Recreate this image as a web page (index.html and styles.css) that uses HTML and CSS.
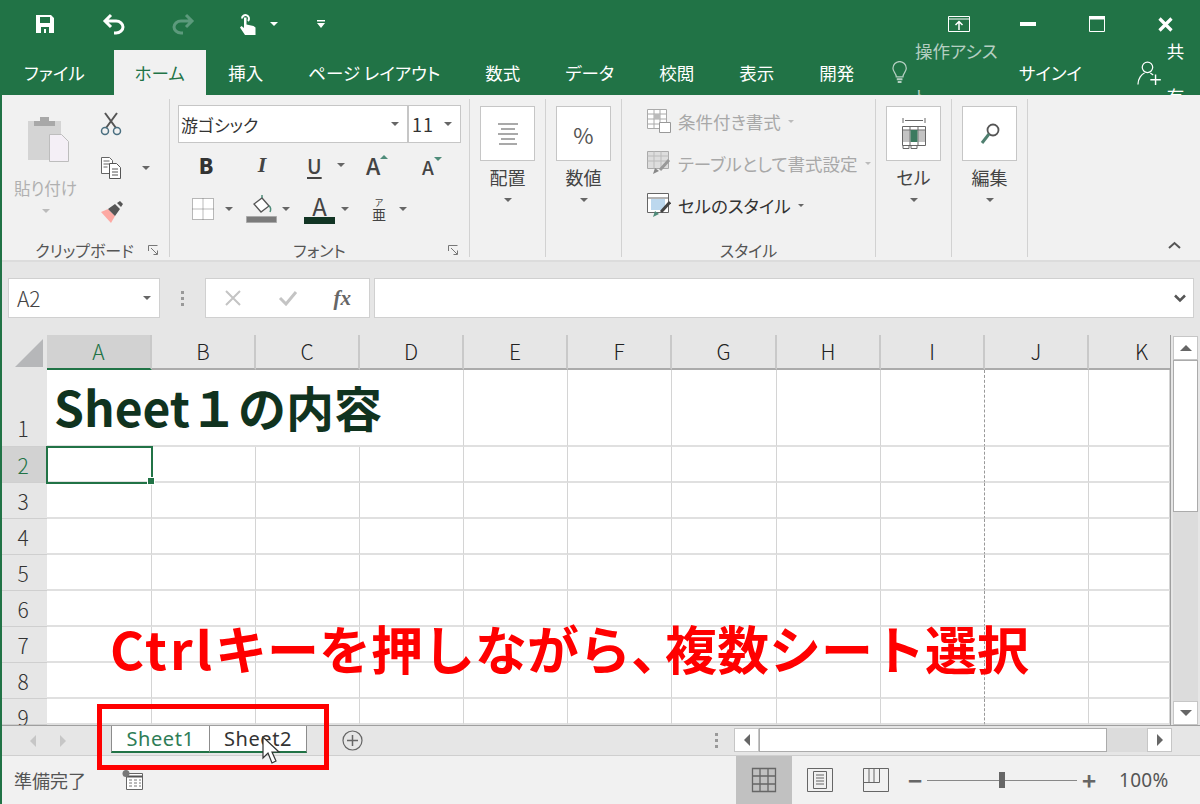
FILE: index.html
```html
<!DOCTYPE html>
<html lang="ja">
<head>
<meta charset="utf-8">
<title>Excel</title>
<link rel="stylesheet" href="styles.css">
</head>
<body>

<!-- title bar -->
<div class="titlebar">
  <div class="qat">
    <span class="qbtn"><svg width="20" height="20" viewBox="0 0 20 20"><path fill="#fff" fill-rule="evenodd" d="M1 1h15l3 3v15H1zM5 3v6h10V3zM6 13v6h3v-4h2v4h3v-6z"/></svg></span>
    <span class="qbtn"><svg width="24" height="22" viewBox="0 0 24 22"><path d="M9 2L3 8l6 6M3 8h11c4 0 7 3 7 6s-3 6-7 6h-2" fill="none" stroke="#fff" stroke-width="3"/></svg></span>
    <span class="qbtn"><svg width="24" height="22" viewBox="0 0 24 22"><path d="M15 2l6 6-6 6M21 8H10c-4 0-7 3-7 6s3 6 7 6h2" fill="none" stroke="#5c9a7c" stroke-width="3"/></svg></span>
    <span class="qbtn qtouch"><svg width="18" height="22" viewBox="0 0 18 22"><path d="M3 5.500a3.500 3.500 0 1 1 6 2.500" fill="none" stroke="#fff" stroke-width="2"/><path fill="#fff" d="M5 4.500h2.500v7l7 1.500 2 1.500v7.500H6L1 14.500l1.500-1.500 2.500 2z"/></svg><i class="caret white"></i></span>
    <span class="qcustom"><svg width="8" height="9" viewBox="0 0 8 9"><path fill="#fff" d="M0 0h8v1.500H0zM0 3h8L4 8z"/></svg></span>
  </div>
  <div class="winbtns">
    <span class="wbtn"><svg width="22" height="16" viewBox="0 0 22 16"><path d="M.5.500h21v15H.5zM.5 3h21" fill="none" stroke="#fff"/><path d="M11 14V6M7.500 9l3.500-3.500L14.500 9" fill="none" stroke="#fff" stroke-width="1.500"/></svg></span>
    <span class="wbtn"><svg width="16" height="4" viewBox="0 0 16 4"><path fill="#fff" d="M0 0h16v4H0z"/></svg></span>
    <span class="wbtn"><svg width="16" height="16" viewBox="0 0 16 16"><path d="M.5.500h15v15H.5z" fill="none" stroke="#fff"/><path fill="#fff" d="M0 0h16v3.500H0z"/></svg></span>
    <span class="wbtn"><svg width="15" height="15" viewBox="0 0 15 15"><path d="M1.500 1.500l12 12M13.500 1.500l-12 12" stroke="#fff" stroke-width="3.200"/></svg></span>
  </div>
</div>

<!-- ribbon tabs -->
<div class="tabs">
  <span class="tab first">ファイル</span>
  <span class="tab active">ホーム</span>
  <span class="tab">挿入</span>
  <span class="tab">ページ レイアウト</span>
  <span class="tab">数式</span>
  <span class="tab">データ</span>
  <span class="tab">校閲</span>
  <span class="tab">表示</span>
  <span class="tab">開発</span>
  <span class="assist"><svg width="16" height="24" viewBox="0 0 16 24"><path d="M4.500 16c0-4-3.500-5-3.500-9a7 7 0 0 1 14 0c0 4-3.500 5-3.500 9z" fill="none" stroke="#b5cfc2" stroke-width="1.300"/><path fill="#b5cfc2" d="M5 17.500h6v2H5zM6 20.500h4v2H6z"/></svg><span class="assist-text">操作アシスト.</span></span>
  <span class="signin">サインイン</span>
  <span class="share"><svg width="26" height="26" viewBox="0 0 26 26"><circle cx="11" cy="7" r="5.500" fill="none" stroke="#fff" stroke-width="1.300"/><path d="M1 25c0-6 4-11 7-12M14 13l3 2" fill="none" stroke="#fff" stroke-width="1.300"/><path d="M14 20h11M19.500 14.500v11" stroke="#fff" stroke-width="1.500"/></svg>共有</span>
</div>

<div class="main">

<!-- ribbon -->
<div class="ribbon">

  <div class="group g-clip">
    <div class="clip-body">
      <div class="paste">
        <svg width="42" height="46" viewBox="0 0 42 46"><path fill="#d4d4d4" d="M0 5h33v39H0z"/><path fill="#a8a8a8" d="M6 5h21v5H6zM12 1h9v5h-9z"/><path fill="#f4eff6" stroke="#bdbdbd" d="M21.500 18.500h12l7 7v20h-19z"/></svg>
        <span class="paste-label">貼り付け</span>
        <i class="caret light"></i>
      </div>
      <div class="clip-tools">
        <span class="clip-tool"><svg width="22" height="24" viewBox="0 0 22 24"><path d="M5 1l11 15M17 1L6 16" stroke="#555" stroke-width="2"/><circle cx="5" cy="19" r="3.500" fill="none" stroke="#4a6f80" stroke-width="1.500"/><circle cx="17" cy="19" r="3.500" fill="none" stroke="#4a6f80" stroke-width="1.500"/></svg></span>
        <span class="clip-tool copy"><svg width="22" height="24" viewBox="0 0 22 24"><path d="M1.500 1.500h8l3 3v13h-11zM3.500 5h6M3.500 8h6M3.500 11h4" fill="#fff" stroke="#666"/><path d="M9.500 7.500h7l4 4v11h-11zM12 13h6M12 16h6M12 19h6" fill="#fff" stroke="#555"/></svg><i class="caret"></i></span>
        <span class="clip-tool"><svg width="24" height="22" viewBox="0 0 24 22"><path fill="#fda9a3" d="M1 11l7-3 7 7-4 7z"/><path fill="#555" d="M8 8l7-5 5 5-5 7zM17 2l3-2 3 3-2 3z"/></svg></span>
      </div>
    </div>
    <div class="group-label">クリップボード<svg class="launcher" width="10" height="10" viewBox="0 0 10 10"><path d="M.5 6V.5H9.500M3 3l6 6M5.500 9.500h4v-4" fill="none" stroke="#777"/></svg></div>
  </div>

  <div class="group g-font">
    <div class="font-body">
      <div class="font-row">
        <span class="fontname">游ゴシック<i class="caret"></i></span>
        <span class="fontsize">11<i class="caret"></i></span>
      </div>
      <div class="tool-row row-style">
        <span class="t-b">B</span>
        <span class="t-i">I</span>
        <span class="t-u"><u>U</u><i class="caret"></i></span>
        <span class="t-grow">A<i class="tri-up"></i></span>
        <span class="t-shrink">A<i class="tri-down"></i></span>
      </div>
      <div class="tool-row row-fill">
        <span class="t-border"><svg width="22" height="22" viewBox="0 0 22 22"><path d="M.5.500h21v21H.5zM11 .5v21M.5 11h21" fill="#fff" stroke="#777" stroke-dasharray="1 1"/></svg><i class="caret"></i></span>
        <span class="t-paint"><svg width="31" height="28" viewBox="0 0 31 28"><path d="M8 9l8-6 7 8-8 6z" fill="#fff" stroke="#555" stroke-width="1.300"/><path d="M16 3V0M23 11c2 1 2 4 1 6" fill="none" stroke="#4f8c7a" stroke-width="1.500"/><path fill="#7b7b7b" stroke="#aaa" d="M.5 21.500h30v6H.5z"/></svg><i class="caret"></i></span>
        <span class="t-color"><span class="color-a">A</span><i class="caret"></i></span>
        <span class="t-phon"><span class="phon"><small>ア</small>亜</span><i class="caret"></i></span>
      </div>
    </div>
    <div class="group-label">フォント<svg class="launcher" width="10" height="10" viewBox="0 0 10 10"><path d="M.5 6V.5H9.500M3 3l6 6M5.500 9.500h4v-4" fill="none" stroke="#777"/></svg></div>
  </div>

  <div class="group g-big">
    <div class="bigbtn"><svg width="20" height="22" viewBox="0 0 20 22"><path d="M0 1h20M3 6h14M0 11h20M3 16h14M1 21h18" stroke="#555" stroke-width="1.200"/></svg></div>
    <span class="big-label">配置</span>
    <i class="caret"></i>
  </div>

  <div class="group g-big">
    <div class="bigbtn"><span class="percent">%</span></div>
    <span class="big-label">数値</span>
    <i class="caret"></i>
  </div>

  <div class="group g-style">
    <div class="style-rows">
      <div class="style-row off"><svg width="24" height="24" viewBox="0 0 24 24"><path d="M.5.500h19v19H.5zM.5 5h19M.5 10h19M.5 15h19M7 .5v19M13 .5v19" fill="#fff" stroke="#aaa"/><path fill="#bbb" d="M7 5h6v5H7z"/><path d="M12.500 13.500h11v10h-11z" fill="#fff" stroke="#999"/></svg>条件付き書式<i class="caret small light"></i></div>
      <div class="style-row off"><svg width="24" height="24" viewBox="0 0 24 24"><path d="M.5.500h21v17H.5z" fill="#ddd" stroke="#aaa"/><path d="M.5 5h21M.5 10h21M7 .5v17M14 .5v17" stroke="#bbb"/><path d="M22 9l-9 10" stroke="#999" stroke-width="3"/><path fill="#888" d="M6 23l2-6 4 3z"/></svg>テーブルとして書式設定<i class="caret small light"></i></div>
      <div class="style-row"><svg width="24" height="24" viewBox="0 0 24 24"><path d="M.5.500h21v19H.5zM.5 5h21" fill="#fff" stroke="#666"/><path fill="#bcd8ee" d="M4 6h14v11H4z"/><path d="M23 9l-9 10" stroke="#444" stroke-width="3"/><path fill="#4f8c7a" d="M6 24l2-6 4 3z"/></svg>セルのスタイル<i class="caret small"></i></div>
    </div>
    <div class="group-label">スタイル</div>
  </div>

  <div class="group g-big">
    <div class="bigbtn"><svg width="24" height="32" viewBox="0 0 24 32"><path d="M1 0v5M23 0v5M3 2.500h18" fill="none" stroke="#666"/><path d="M.5 8.500h23v19H.5zM.5 12h23M8 8.500v19M16 8.500v19" fill="#fff" stroke="#666"/><path fill="#3c7a5f" d="M8.500 12h7v12h-7z"/><path fill="#888" d="M1 12h7v12H1zM16 12h7v12h-7z" opacity=".5"/><path d="M1 27.500v3h6v-3M9 27.500v3h6v-3" fill="none" stroke="#666"/></svg></div>
    <span class="big-label">セル</span>
    <i class="caret"></i>
  </div>

  <div class="group g-big">
    <div class="bigbtn"><svg width="20" height="24" viewBox="0 0 20 24"><circle cx="13" cy="8" r="5.500" fill="none" stroke="#555" stroke-width="1.800"/><path d="M9 12l-7 9" stroke="#4f7f6f" stroke-width="3"/></svg></div>
    <span class="big-label">編集</span>
    <i class="caret"></i>
  </div>

  <div class="collapse"><svg width="13" height="8" viewBox="0 0 13 8"><path d="M1 7l5.500-5L12 7" fill="none" stroke="#555" stroke-width="2"/></svg></div>
</div>

<!-- formula bar -->
<div class="formulabar">
  <div class="namebox">A2<i class="caret"></i></div>
  <div class="dots"><i></i><i></i><i></i></div>
  <div class="fbtns">
    <svg width="18" height="18" viewBox="0 0 18 18"><path d="M2 2l14 14M16 2L2 16" stroke="#c4c4c4" stroke-width="2"/></svg>
    <svg width="20" height="16" viewBox="0 0 20 16"><path d="M2 8l6 6L18 2" fill="none" stroke="#c4c4c4" stroke-width="3"/></svg>
    <span class="fx">fx</span>
  </div>
  <div class="finput"><svg width="12" height="9" viewBox="0 0 12 9"><path d="M1 1.500l5 5 5-5" fill="none" stroke="#555" stroke-width="2.500"/></svg></div>
</div>

<!-- sheet -->
<div class="sheetarea">
  <div class="sheet">
    <div class="corner"><svg width="28" height="28" viewBox="0 0 28 28"><path fill="#b6b7b9" d="M28 0v28H0z"/></svg></div>
    <div class="colhead sel">A</div><div class="colhead">B</div><div class="colhead">C</div><div class="colhead">D</div><div class="colhead">E</div><div class="colhead">F</div><div class="colhead">G</div><div class="colhead">H</div><div class="colhead">I</div><div class="colhead">J</div><div class="colhead cut">K</div>

    <div class="rowhead first">1</div><div class="cell title">Sheet１の内容</div><div class="cell"></div><div class="cell"></div><div class="cell"></div><div class="cell"></div><div class="cell brk"></div><div class="cell"></div><div class="cell"></div>
    <div class="rowhead sel">2</div><div class="cell cur"></div><div class="cell"></div><div class="cell"></div><div class="cell"></div><div class="cell"></div><div class="cell"></div><div class="cell"></div><div class="cell"></div><div class="cell brk"></div><div class="cell"></div><div class="cell"></div>
    <div class="rowhead">3</div><div class="cell"></div><div class="cell"></div><div class="cell"></div><div class="cell"></div><div class="cell"></div><div class="cell"></div><div class="cell"></div><div class="cell"></div><div class="cell brk"></div><div class="cell"></div><div class="cell"></div>
    <div class="rowhead">4</div><div class="cell"></div><div class="cell"></div><div class="cell"></div><div class="cell"></div><div class="cell"></div><div class="cell"></div><div class="cell"></div><div class="cell"></div><div class="cell brk"></div><div class="cell"></div><div class="cell"></div>
    <div class="rowhead">5</div><div class="cell"></div><div class="cell"></div><div class="cell"></div><div class="cell"></div><div class="cell"></div><div class="cell"></div><div class="cell"></div><div class="cell"></div><div class="cell brk"></div><div class="cell"></div><div class="cell"></div>
    <div class="rowhead">6</div><div class="cell"></div><div class="cell"></div><div class="cell"></div><div class="cell"></div><div class="cell"></div><div class="cell"></div><div class="cell"></div><div class="cell"></div><div class="cell brk"></div><div class="cell"></div><div class="cell"></div>
    <div class="rowhead">7</div><div class="cell"></div><div class="cell"></div><div class="cell"></div><div class="cell"></div><div class="cell"></div><div class="cell"></div><div class="cell"></div><div class="cell"></div><div class="cell brk"></div><div class="cell"></div><div class="cell"></div>
    <div class="rowhead">8</div><div class="cell"></div><div class="cell"></div><div class="cell"></div><div class="cell"></div><div class="cell"></div><div class="cell"></div><div class="cell"></div><div class="cell"></div><div class="cell brk"></div><div class="cell"></div><div class="cell"></div>
    <div class="rowhead">9</div><div class="cell"></div><div class="cell"></div><div class="cell"></div><div class="cell"></div><div class="cell"></div><div class="cell"></div><div class="cell"></div><div class="cell"></div><div class="cell brk"></div><div class="cell"></div><div class="cell"></div>
  </div>
  <div class="vscroll">
    <div class="sbtn"><i class="tri-up big"></i></div>
    <div class="vthumb"></div>
    <div class="vtrack"></div>
    <div class="sbtn"><i class="tri-down big"></i></div>
  </div>
</div>

<!-- sheet tabs -->
<div class="sheetbar">
  <div class="nav"><i class="tri-left light"></i><i class="tri-right light"></i></div>
  <div class="stab on">Sheet1</div>
  <div class="stab second">Sheet2</div>
  <div class="addsheet"><svg width="21" height="21" viewBox="0 0 21 21"><circle cx="10.500" cy="10.500" r="9.500" fill="none" stroke="#666" stroke-width="1.200"/><path d="M10.500 5v11M5 10.500h11" stroke="#666" stroke-width="1.500"/></svg></div>
  <div class="dots small"><i></i><i></i><i></i></div>
  <div class="hscroll">
    <div class="hbtn"><i class="tri-left"></i></div>
    <div class="hthumb"></div>
    <div class="htrack"></div>
    <div class="hbtn right"><i class="tri-right"></i></div>
  </div>
</div>

<!-- status bar -->
<div class="statusbar">
  <span class="ready">準備完了</span>
  <svg class="macro" width="21" height="20" viewBox="0 0 21 20"><path d="M4.500 3.500h16v16h-16z" fill="#fff" stroke="#666"/><path d="M4.500 6.500h16" stroke="#555" stroke-width="2"/><path d="M7 10h3M12 10h3M17 10h2M7 13h3M12 13h3M17 13h2M7 16h3M12 16h3M17 16h2" stroke="#777"/><circle cx="4" cy="3.500" r="3.500" fill="#777"/></svg>
  <div class="views">
    <span class="view on"><svg width="26" height="26" viewBox="0 0 26 26"><path d="M1.500 1.500h23v23h-23zM1.500 9h23M1.500 17h23M9 1.500v23M17 1.500v23" fill="none" stroke="#666" stroke-width="1.300"/></svg></span>
    <span class="view"><svg width="26" height="24" viewBox="0 0 26 24"><path d="M.5.500h25v23H.5z" fill="none" stroke="#666"/><path d="M6.500 3.500h13v17h-13zM9 7h8M9 10h8M9 13h8M9 16h8" fill="none" stroke="#666"/></svg></span>
    <span class="view"><svg width="26" height="24" viewBox="0 0 26 24"><path d="M.5.500h25v23H.5zM.5 14.500h16V.5M6 .5v14M11 .5v14" fill="none" stroke="#666"/></svg></span>
  </div>
  <div class="zoombar">
    <span class="zbtn">−</span>
    <span class="zslider"><i></i></span>
    <span class="zbtn">+</span>
  </div>
  <span class="zoomval">100%</span>
</div>

</div>

<!-- annotation over the screenshot -->
<div class="note"><span class="note-latin">Ctrl</span>キーを押しながら<span class="note-comma">、</span>複数シート選択</div>
<div class="redbox"></div>
<svg class="pointer" width="20" height="28" viewBox="0 0 20 28"><path d="M1 1v21l5-5 4 10 4-2-4-9h7z" fill="#fff" stroke="#333" stroke-width="1.200"/></svg>

</body>
</html>
```

FILE: styles.css
```css
* {box-sizing: border-box}

html, body {
  height: 100%;
  margin: 0;
  overflow: hidden;
}

body {
  width: 1200px;
  height: 804px;
  display: flex;
  flex-direction: column;
  position: relative;
  font-family: "Noto Sans CJK JP", "Noto Sans", sans-serif;
  color: #444;
  background: #f1f1f1;
}

i {display: block}

/* carets and arrows */
.caret {
  width: 0;
  height: 0;
  border-left: 4px solid transparent;
  border-right: 4px solid transparent;
  border-top: 4px solid #666;
  flex: none;
}
.caret.white {border-top-color: #fff}
.caret.light {border-top-color: #bbb}
.caret.small {border-left-width: 3px; border-right-width: 3px; border-top-width: 3px}

.tri-up, .tri-down {
  width: 0;
  height: 0;
  border-left: 4px solid transparent;
  border-right: 4px solid transparent;
}
.tri-up {border-bottom: 4px solid #4f8c7a}
.tri-down {border-top: 4px solid #4f8c7a}
.tri-up.big, .tri-down.big {border-left-width: 6px; border-right-width: 6px; border-top-color: #666; border-bottom-color: #666}
.tri-up.big {border-bottom-width: 6px}
.tri-down.big {border-top-width: 6px}

.tri-left, .tri-right {
  width: 0;
  height: 0;
  border-top: 6px solid transparent;
  border-bottom: 6px solid transparent;
}
.tri-left {border-right: 6px solid #666}
.tri-right {border-left: 6px solid #666}
.tri-left.light {border-right-color: #c6c6c6}
.tri-right.light {border-left-color: #c6c6c6}

/* title bar */
.titlebar {
  height: 50px;
  flex: none;
  background: #217346;
  display: flex;
  justify-content: space-between;
}
.qat {
  display: flex;
  align-items: center;
  padding-left: 10px;
  height: 48px;
}
.qbtn {
  width: 69px;
  display: flex;
  justify-content: center;
  align-items: center;
  gap: 13px;
}
.qtouch {padding-left: 14px}
.qcustom {padding-left: 31px; display: flex}
.winbtns {
  display: flex;
  align-items: center;
  height: 48px;
}
.wbtn {
  width: 69px;
  display: flex;
  justify-content: center;
}

/* ribbon tabs */
.tabs {
  height: 45px;
  flex: none;
  background: #217346;
  display: flex;
  align-items: stretch;
  color: #fff;
  font-size: 17.500px;
  font-feature-settings: "palt";
  line-height: 45px;
}
.tab {
  padding: 0 22.500px;
  white-space: nowrap;
}
.tab.first {padding: 0 29px 0 24px}
.tab.active {
  background: #f1f1f1;
  color: #217346;
  padding: 0 21px;
}
.assist {
  display: flex;
  align-items: center;
  gap: 8px;
  margin-left: 15px;
  color: #b5cfc2;
}
.signin {margin-left: 8px}
.share {
  display: flex;
  align-items: center;
  gap: 5px;
  margin-left: 43px;
}

.main {
  flex: 1;
  display: flex;
  flex-direction: column;
  position: relative;
  min-height: 0;
}
.main::before {
  content: "";
  position: absolute;
  left: 0;
  top: 0;
  bottom: 0;
  width: 1.500px;
  background: #217346;
  z-index: 2;
}

/* ribbon */
.ribbon {
  height: 167px;
  flex: none;
  display: flex;
  background: #f1f1f1;
  border-bottom: 2px solid #dcdcdc;
  padding-top: 4px;
  padding-bottom: 3px;
  position: relative;
  font-feature-settings: "palt";
}
.group {
  display: flex;
  flex-direction: column;
  border-right: 1px solid #d2d2d2;
  font-size: 16px;
  flex: none;
  position: relative;
  min-height: 0;
}
.group-label {
  margin-top: auto;
  height: 14px;
  line-height: 14px;
  text-align: center;
  color: #555;
  font-size: 16px;
}
.launcher {position: absolute; right: 11px; bottom: 2px}

.g-clip {width: 170px}
.clip-body {display: flex; flex: 1; min-height: 0}
.paste {
  width: 91px;
  padding-top: 17px;
  display: flex;
  flex-direction: column;
  align-items: center;
  color: #b0b0b0;
}
.paste svg {margin-left: 6px}
.paste-label {
  margin-top: 16px;
  font-size: 16.500px;
  line-height: 20px;
}
.paste .caret {margin-top: 11px}
.clip-tools {padding-top: 3px}
.clip-tool {
  display: flex;
  align-items: center;
  gap: 22px;
  height: 44px;
  padding-left: 9px;
}
.clip-tool.copy {gap: 20px}

.g-font {width: 300px}
.font-body {padding: 6px 0 0 8px; flex: 1; min-height: 0}
.font-row {display: flex; height: 38px}
.fontname, .fontsize {
  background: #fff;
  border: 1px solid #c6c6c6;
  display: flex;
  align-items: center;
  justify-content: space-between;
  font-size: 17px;
  color: #333;
  padding: 0 8px 0 2px;
}
.fontname {width: 229px; border-right: none}
.fontsize {width: 54px; border-left: 2px solid #c6c6c6; padding-left: 3px; font-size: 18px; letter-spacing: 1px}

.tool-row {display: flex; align-items: center; height: 44px}
.row-style {color: #444}
.t-b {width: 56px; text-align: center; font-weight: 900; font-size: 21px; color: #333}
.t-i {width: 56px; text-align: center; font-style: italic; font-weight: 700; font-size: 22px; font-family: "Liberation Serif", serif}
.t-u {width: 64px; display: flex; align-items: center; padding-left: 17px; gap: 15px; font-size: 20px; font-weight: 500}
.t-u u {text-underline-offset: 3px}
.t-grow, .t-shrink {display: flex; font-weight: 500; font-size: 23px; line-height: 30px}
.t-grow {width: 56px; padding-left: 12px}
.t-shrink {font-size: 19px; padding-left: 12px; padding-top: 3px}
.t-grow i, .t-shrink i {margin-top: 5px}

.t-border, .t-paint, .t-color, .t-phon {display: flex; align-items: center}
.t-border {margin-left: 14px; gap: 11px}
.t-paint {margin-left: 13px; gap: 5px}
.t-color {margin-left: 14px; gap: 6px}
.t-phon {margin-left: 21px; gap: 11px}
.color-a {
  width: 31px;
  height: 30px;
  text-align: center;
  font-size: 24px;
  line-height: 24px;
  color: #444;
  border-bottom: 7px solid #123524;
}
.phon {
  display: flex;
  flex-direction: column;
  align-items: center;
  font-size: 14px;
  line-height: 14px;
  width: 18px;
}
.phon small {font-size: 9px; line-height: 9px}

.g-big {
  align-items: center;
  padding-top: 7px;
  width: 76px;
}
.bigbtn {
  height: 55px;
  background: #fff;
  border: 1px solid #c6c6c6;
  display: flex;
  align-items: center;
  justify-content: center;
  width: 55px;
}
.big-label {margin-top: 4px; line-height: 24px; color: #444; font-size: 18px}
.g-big .caret {margin-top: 9px}
.percent {font-size: 22px; color: #555}

.g-style {width: 254px}
.style-rows {padding: 1px 0 0 25px}
.style-row {
  display: flex;
  align-items: center;
  height: 42px;
  gap: 7px;
  font-size: 17.500px;
  color: #333;
}
.style-row.off {color: #a8a8a8}

.collapse {
  position: absolute;
  right: 19px;
  bottom: 6px;
}

/* formula bar */
.formulabar {
  height: 73px;
  flex: none;
  background: #e6e6e6;
  display: flex;
  padding: 16px 6px 17px 8px;
}
.namebox {
  width: 152px;
  background: #fff;
  border: 1px solid #d0d0d0;
  display: flex;
  justify-content: space-between;
  align-items: center;
  padding: 0 8px;
  font-size: 21px;
  font-weight: 300;
  color: #444;
}
.dots {
  width: 45px;
  display: flex;
  flex-direction: column;
  align-items: center;
  justify-content: center;
  gap: 3px;
}
.dots i {width: 3px; height: 3px; background: #999}
.fbtns {
  width: 165px;
  background: #fff;
  border: 1px solid #d0d0d0;
  display: flex;
  align-items: center;
  justify-content: space-between;
  padding: 0 18px 0 18px;
}
.fx {
  font-family: "Liberation Serif", serif;
  font-style: italic;
  font-weight: 700;
  font-size: 21px;
  color: #666;
}
.finput {
  flex: 1;
  margin-left: 4px;
  background: #fff;
  border: 1px solid #d0d0d0;
  display: flex;
  align-items: center;
  justify-content: flex-end;
  padding-right: 7px;
}

/* sheet grid */
.sheetarea {
  height: 390px;
  flex: none;
  display: flex;
  background: #e6e6e6;
}
.sheet {
  width: 1170px;
  height: 390px;
  display: grid;
  grid-template-columns: 47px 105px 104px 104px 104px 104px 104px 105px 104px 104px 104px 81px;
  grid-template-rows: 35px 77px 36px 36px 36px 36px 36px 36px 36px 26px;
  overflow: hidden;
}
.corner {
  background: #e6e6e6;
  padding: 4px 0 0 15px;
}
.colhead {
  background: #e6e6e6;
  border-right: 2px solid #c9c9c9;
  border-bottom: 2px solid #ababab;
  text-align: center;
  font-size: 21px;
  font-weight: 300;
  line-height: 33px;
  color: #222;
}
.colhead.sel {
  background: #d2d2d2;
  border-bottom-color: #217346;
  color: #217346;
}
.colhead.cut {padding-left: 24px; border-right: none}
.rowhead {
  background: #e6e6e6;
  border-bottom: 1px solid #cfcfcf;
  text-align: center;
  font-size: 21px;
  font-weight: 300;
  line-height: 36px;
  color: #333;
  display: flex;
  align-items: flex-start;
  justify-content: center;
  padding-right: 1px;
}
.rowhead.first {align-items: flex-end}
.rowhead.sel {background: #d2d2d2; color: #217346}
.cell {
  background: #fff;
  border-right: 1px solid #d4d4d4;
  border-bottom: 2px solid #e0e0e0;
}
.cell.brk {border-right: 1px dashed #999}
.title {
  grid-column: span 4;
  font-size: 48px;
  font-weight: 700;
  color: #10331f;
  line-height: 72px;
  padding-left: 7px;
  white-space: nowrap;
}
.cur {
  position: relative;
  outline: 2px solid #217346;
  outline-offset: -1px;
}
.cur::after {
  content: "";
  position: absolute;
  right: -4px;
  bottom: -4px;
  width: 6px;
  height: 6px;
  background: #217346;
  border: 1px solid #fff;
}

.vscroll {
  width: 30px;
  display: flex;
  flex-direction: column;
  padding: 1px 2px 0 2px;
  border-left: 1px solid #9f9f9f;
}
.sbtn {
  height: 24px;
  flex: none;
  background: #fff;
  border: 1px solid #c6c6c6;
  display: flex;
  align-items: center;
  justify-content: center;
}
.vthumb {
  height: 152px;
  background: #fff;
  border: 1px solid #ababab;
}
.vtrack {flex: 1; background: #dcdcdc}

/* sheet tabs */
.sheetbar {
  height: 31px;
  flex: none;
  background: #e6e6e6;
  border-top: 1px solid #9f9f9f;
  border-bottom: 1px solid #cfcfcf;
  display: flex;
}
.nav {
  width: 111px;
  display: flex;
  align-items: center;
  gap: 24px;
  padding-left: 30px;
}
.stab {
  width: 98px;
  height: 27px;
  background: #fff;
  border-left: 1px solid #8c8c8c;
  border-bottom: 2px solid #217346;
  text-align: center;
  font-family: "Noto Sans", sans-serif;
  font-size: 20px;
  letter-spacing: .6px;
  line-height: 25px;
  color: #2e7d57;
}
.stab.second {color: #333; border-right: 1px solid #8c8c8c}
.addsheet {margin-left: 35px; padding-top: 4px}
.dots.small {width: 22px; margin-left: 342px}
.hscroll {
  width: 438px;
  margin-left: 7px;
  display: flex;
  padding-top: 2px;
  height: 26px;
}
.hbtn {
  width: 25px;
  background: #fff;
  border: 1px solid #c6c6c6;
  display: flex;
  align-items: center;
  justify-content: center;
}
.hthumb {width: 348px; background: #fff; border: 1px solid #ababab}
.htrack {flex: 1; background: #dcdcdc}

/* status bar */
.statusbar {
  flex: 1;
  background: #f1f1f1;
  display: flex;
  align-items: center;
  padding-left: 14px;
}
.ready {font-size: 18px; color: #555; width: 108px}
.macro {flex: none}
.views {
  display: flex;
  margin-left: 593px;
  align-self: stretch;
}
.view {
  width: 56px;
  display: flex;
  align-items: center;
  justify-content: center;
}
.view.on {background: #c1c1c1}
.zoombar {
  display: flex;
  align-items: center;
  margin-left: -1px;
}
.zbtn {width: 24px; text-align: center; font-size: 24px; font-weight: 700; line-height: 24px; color: #666}
.zslider {
  width: 150px;
  height: 1px;
  background: #888;
  position: relative;
}
.zslider i {
  position: absolute;
  left: 72px;
  top: -8px;
  width: 6px;
  height: 16px;
  background: #666;
}
.zoomval {margin-left: 18px; font-size: 19px; letter-spacing: .3px; color: #555; font-family: "Noto Sans", sans-serif}

/* annotation */
.note {
  position: absolute;
  left: 110px;
  top: 610px;
  font-size: 52px;
  line-height: 76px;
  font-weight: 700;
  color: #f00;
  white-space: nowrap;
  z-index: 5;
}
.note-latin {letter-spacing: 3px}
.note-comma {letter-spacing: -18px; margin-right: 0}
.redbox {
  position: absolute;
  left: 97px;
  top: 704px;
  width: 232px;
  height: 66px;
  border: 5px solid #f00;
  z-index: 5;
}
.pointer {
  position: absolute;
  left: 262px;
  top: 736px;
  z-index: 6;
}
```
